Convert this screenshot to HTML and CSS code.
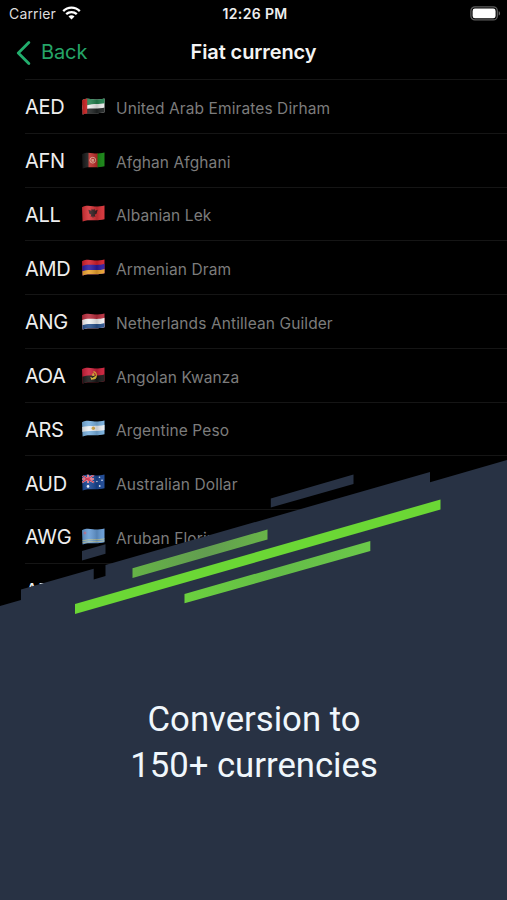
FILE: index.html
```html
<!DOCTYPE html>
<html lang="en">
<head>
<meta charset="utf-8">
<title>Fiat currency</title>
<link rel="stylesheet" href="styles.css">
</head>
<body>
<svg class="defs" aria-hidden="true">
  <defs>
    <clipPath id="wave"><path d="M0 2.2C4 .2 7 .7 11 1.3S18 1.2 22.5 .4V14.3C18 15.4 15 15.4 11 15.3S4 15 .6 16.5Z"/></clipPath>
    <linearGradient id="shade"><stop offset="0" stop-color="#000" stop-opacity=".15"/><stop offset=".3" stop-color="#fff" stop-opacity=".12"/><stop offset=".65" stop-color="#000" stop-opacity=".16"/><stop offset="1" stop-color="#fff" stop-opacity=".05"/></linearGradient>
    <linearGradient id="upper"><stop offset="0" stop-color="#65b246"/><stop offset=".55" stop-color="#629d50"/><stop offset="1" stop-color="#68b448"/></linearGradient>
    <linearGradient id="lower"><stop offset="0" stop-color="#6bd03e"/><stop offset=".5" stop-color="#64bc48"/><stop offset="1" stop-color="#6bc84a"/></linearGradient>
  </defs>
</svg>
<main class="phone">
  <header class="status">
    <div class="carrier"><span class="carrier-name">Carrier</span>
      <svg width="19" height="14" viewBox="0 0 19 14" fill="none" stroke="#fff" stroke-width="2.3"><path d="M1.2 5.1C5.8.5 13.2.5 17.8 5.1M4.2 8.2C7.2 5.3 11.8 5.3 14.8 8.2"/><path d="M9.5 13.4 6.5 10.4C8.2 8.9 10.8 8.9 12.5 10.4Z" fill="#fff" stroke="none"/></svg>
    </div>
    <div class="clock">12:26 PM</div>
    <svg class="battery" width="31" height="15" viewBox="0 0 31 15"><rect x=".9" y=".9" width="26.4" height="13" rx="4" fill="none" stroke="#5d5d5d" stroke-width="1.3"/><rect x="2.6" y="2.6" width="23" height="9.6" rx="2.3" fill="#fff"/><path d="M28.7 5.2C30.5 5.8 30.5 9 28.7 9.6Z" fill="#6a6a6a"/></svg>
  </header>
  <nav class="nav">
    <a class="back"><svg width="15" height="24" viewBox="0 0 15 24"><path d="M12.8 1.6 2.3 12 12.8 22.4" fill="none" stroke="#22ae6d" stroke-width="2.8" stroke-linecap="round" stroke-linejoin="round"/></svg><span>Back</span></a>
    <h1 class="title">Fiat currency</h1>
  </nav>
  <ul class="list">
    <li class="row"><span class="code">AED</span><svg class="flag" viewBox="0 0 23 17"><g clip-path="url(#wave)"><path fill="#eee" d="M0 0H23V17H0Z"/><path fill="#23814f" d="M0 0H23V5.2C17 6.5 12 5 5 7.3H0Z"/><path fill="#202424" d="M0 17V11.5C8 9.5 15 11.5 23 9.6V17Z"/><path fill="#cc2020" d="M0 0H5.2V17H0Z"/><path fill="url(#shade)" d="M0 0H23V17H0Z"/></g></svg><span class="name">United Arab Emirates Dirham</span></li>
    <li class="row"><span class="code">AFN</span><svg class="flag" viewBox="0 0 23 17"><g clip-path="url(#wave)"><path fill="#141616" d="M0 0H7V17H0Z"/><path fill="#bd2c29" d="M6.5 0H16V17H6.5Z"/><path fill="#12830f" d="M15.5 0H23V17H15.5Z"/><circle cx="10.8" cy="8.2" r="2.9" fill="none" stroke="#e0a690" stroke-width="1"/><path d="M9.5 7h2.6v2.8H9.5z" fill="#dc9b83"/><path fill="url(#shade)" d="M0 0H23V17H0Z"/></g></svg><span class="name">Afghan Afghani</span></li>
    <li class="row"><span class="code">ALL</span><svg class="flag" viewBox="0 0 23 17"><g clip-path="url(#wave)"><path fill="#d62f34" d="M0 0H23V17H0Z"/><path fill="#321e20" d="M11 5 12.4 3.8 13 5.8 15.7 4.8 14.4 9 12.8 9.4 13.4 12 11.7 11.3 11 13.3 10.2 11.3 8.7 12 9.2 9.4 7.4 8.8 6.4 4.8 9.2 5.8 9.8 3.8Z"/><path fill="url(#shade)" d="M0 0H23V17H0Z"/></g></svg><span class="name">Albanian Lek</span></li>
    <li class="row"><span class="code">AMD</span><svg class="flag" viewBox="0 0 23 17"><g clip-path="url(#wave)"><path fill="#d41e2c" d="M0 0H23V17H0Z"/><path fill="#2b1aa0" d="M0 7C7 4 14 7.6 23 4.8V17H0Z"/><path fill="#eda32d" d="M0 12.2C8 9.3 14 12.6 23 9.9V17H0Z"/><path fill="url(#shade)" d="M0 0H23V17H0Z"/></g></svg><span class="name">Armenian Dram</span></li>
    <li class="row"><span class="code">ANG</span><svg class="flag" viewBox="0 0 23 17"><g clip-path="url(#wave)"><path fill="#b92c3c" d="M0 0H23V17H0Z"/><path fill="#f2f2f4" d="M0 7C7 4 14 7.6 23 4.8V17H0Z"/><path fill="#28518e" d="M0 12.2C8 9.3 14 12.6 23 9.9V17H0Z"/><path fill="url(#shade)" d="M0 0H23V17H0Z"/></g></svg><span class="name">Netherlands Antillean Guilder</span></li>
    <li class="row"><span class="code">AOA</span><svg class="flag" viewBox="0 0 23 17"><g clip-path="url(#wave)"><path fill="#cb1c37" d="M0 0H23V17H0Z"/><path fill="#171717" d="M0 9.8C7 7 14 10 23 7.3V17H0Z"/><path fill="none" stroke="#e2bd32" stroke-width="1.1" d="M11.5 4.6C16 6 14.8 12 11 11.9 9.8 11.9 9 11 8.7 10.2M9.3 12.5 14 9.3M11.2 6V9M9.8 8H12.7"/><path fill="url(#shade)" d="M0 0H23V17H0Z"/></g></svg><span class="name">Angolan Kwanza</span></li>
    <li class="row"><span class="code">ARS</span><svg class="flag" viewBox="0 0 23 17"><g clip-path="url(#wave)"><path fill="#78b0df" d="M0 0H23V17H0Z"/><path fill="#edf1f4" d="M0 7C7 4.8 14 7 23 4.8V10C14 12 8 9.8 0 12Z"/><circle cx="11.3" cy="8.3" r="1.7" fill="#d3a440"/><path fill="url(#shade)" d="M0 0H23V17H0Z"/></g></svg><span class="name">Argentine Peso</span></li>
    <li class="row"><span class="code">AUD</span><svg class="flag" viewBox="0 0 23 17"><g clip-path="url(#wave)"><path fill="#174493" d="M0 0H23V17H0Z"/><path stroke="#f1dbe3" stroke-width="2" d="M0 1.5 12 8.5M0 8.5 12 1M0 5H12M6 0V9"/><path stroke="#d52948" stroke-width="1.1" d="M0 1.5 12 8.5M0 8.5 12 1M0 5H12M6 0V9"/><g fill="#eef3ff"><circle cx="6" cy="12.4" r="1.3"/><circle cx="17.5" cy="3.3" r=".8"/><circle cx="14.9" cy="7.5" r=".8"/><circle cx="20" cy="6.3" r=".8"/><circle cx="17.7" cy="12" r=".9"/></g><path fill="url(#shade)" d="M0 0H23V17H0Z"/></g></svg><span class="name">Australian Dollar</span></li>
    <li class="row"><span class="code">AWG</span><svg class="flag" viewBox="0 0 23 17"><g clip-path="url(#wave)"><path fill="#659bd6" d="M0 0H23V17H0Z"/><path stroke="#c9c98c" fill="none" stroke-width=".8" d="M0 12.9C8 10.5 15 12.7 23 10.8M0 14.9C8 12.5 15 14.7 23 12.8"/><path fill="#d06a86" d="M3 3 3.6 4.4 5 5 3.6 5.6 3 7 2.4 5.6 1 5 2.4 4.4Z"/><path fill="url(#shade)" d="M0 0H23V17H0Z"/></g></svg><span class="name">Aruban Florin</span></li>
    <li class="row"><span class="code">AZN</span></li>
  </ul>
  <section class="promo">
    <svg class="banner" viewBox="0 0 507 450" width="507" height="450">
      <g fill="#283244">
        <path d="M0 156 21 150V139.5L93.7 118.7V129.5L105.5 126V115L430 22V32.2L507 10V450H0Z"/>
        <path d="M82 101 105.5 94.2V103.7L82 110.5Z"/>
        <path d="M270.8 48.5 353.5 24.5V34L270.8 57.5Z"/>
      </g>
      <path fill="url(#upper)" d="M132.5 118.3 267.5 79.5V89.5L132.5 128Z"/>
      <path fill="#6bd735" d="M75 154 440.5 49.5V59.5L75 164Z"/>
      <path fill="url(#lower)" d="M184.5 144 370.3 91V101L184.5 153.3Z"/>
    </svg>
    <p class="caption"><span class="line1">Conversion to</span><br><span class="line2">150+ currencies</span></p>
  </section>
</main>
</body>
</html>
```
FILE: styles.css
```css
* { box-sizing: border-box; }
body { margin: 0; background: #000; font-family: Inter, "Liberation Sans", sans-serif; }
.defs { position: absolute; width: 0; height: 0; }
.phone { position: relative; width: 507px; height: 900px; overflow: hidden; background: #000; color: #f4f4f4; }
.status { display: grid; grid-template-columns: 1fr auto 1fr; align-items: center; height: 27px; padding: 0 6px 0 9px; }
.carrier { display: flex; align-items: center; gap: 6px; font-size: 14px; letter-spacing: .15px; color: #ddd; }
.carrier svg { margin-top: -2px; }
.clock { font-size: 14px; font-weight: 600; letter-spacing: .35px; color: #eee; }
.battery { justify-self: end; }
.nav { display: grid; grid-template-columns: 1fr auto 1fr; align-items: center; height: 52px; padding: 0 16px; }
.back { display: flex; align-items: center; gap: 10px; font-size: 20px; letter-spacing: -.1px; color: #25a568; }
.back span, .title { margin-top: -2px; }
.title { margin-bottom: 0; font-size: 20px; font-weight: 600; letter-spacing: -.1px; }
.list { margin: 0 0 0 25px; padding: 0; list-style: none; border-top: 1px solid #151515; }
.row { display: grid; grid-template-columns: 57px 34px 1fr; align-items: center; height: 53.75px; border-bottom: 1px solid #151515; }
.code { padding-top: 2px; font-size: 20px; letter-spacing: -.3px; color: #eee; }
.flag { width: 23px; height: 17px; }
.name { padding-top: 4px; font-size: 15.5px; letter-spacing: .1px; color: #7c7c7c; }
.promo { position: absolute; left: 0; bottom: 0; width: 507px; height: 450px; }
.banner { display: block; }
.caption { position: absolute; top: 246px; left: 0; width: 100%; margin: 0; padding-left: 1px; text-align: center; font: 34.7px/46px Roboto, sans-serif; color: #f0f7fc; }
```
